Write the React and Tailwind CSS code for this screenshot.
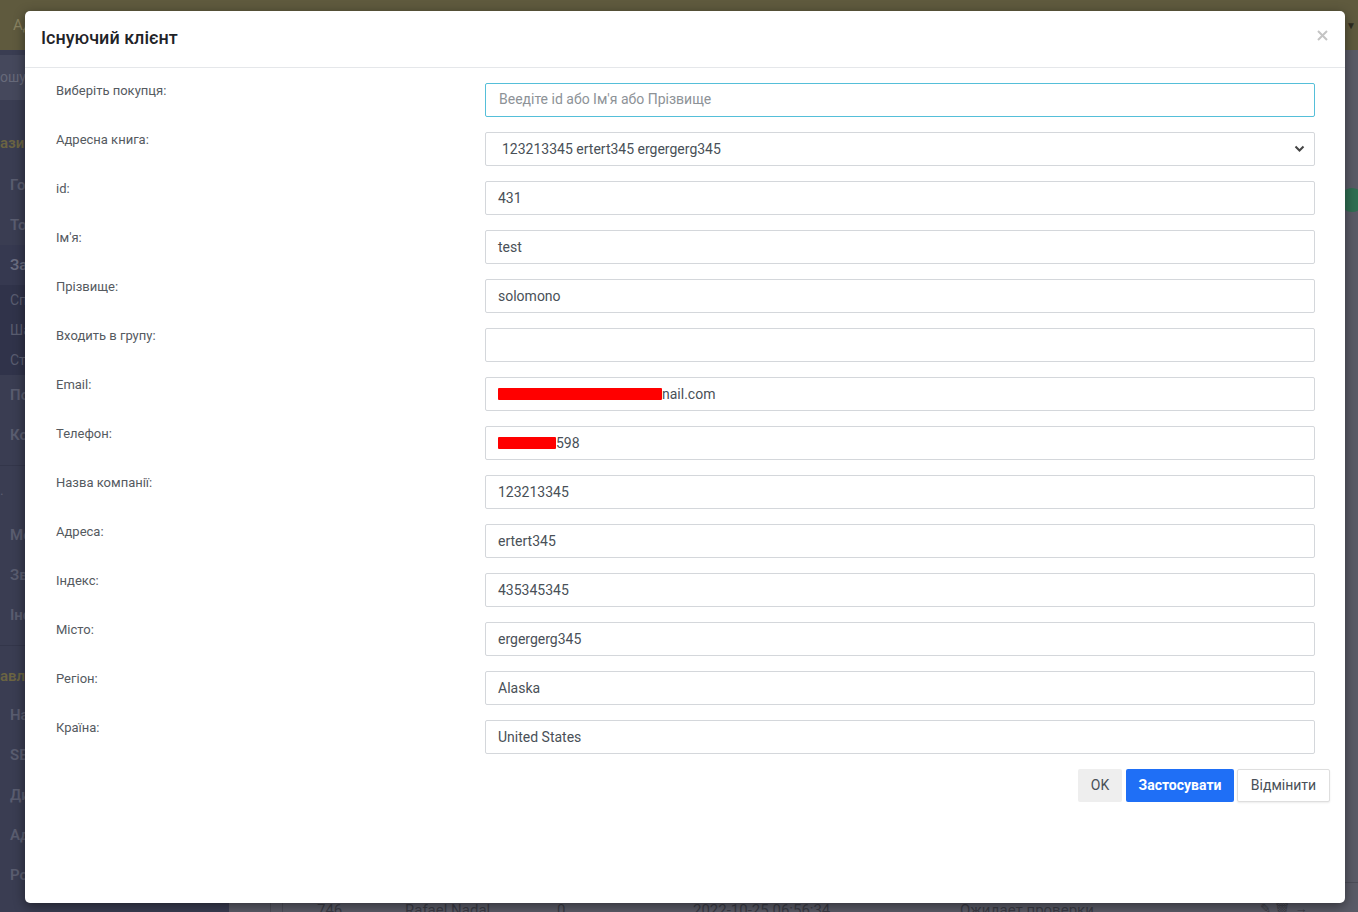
import React from "react";

const fields = [
  { label: "Виберіть покупця:", placeholder: "Веедіте id або Ім'я або Прізвище", focus: true },
  { label: "Адресна книга:", value: "123213345 ertert345 ergergerg345", select: true },
  { label: "id:", value: "431" },
  { label: "Ім'я:", value: "test" },
  { label: "Прізвище:", value: "solomono" },
  { label: "Входить в групу:", value: "" },
  { label: "Email:", value: "nail.com", redact: "w-[164px]" },
  { label: "Телефон:", value: "598", redact: "w-[58px]" },
  { label: "Назва компанії:", value: "123213345" },
  { label: "Адреса:", value: "ertert345" },
  { label: "Індекс:", value: "435345345" },
  { label: "Місто:", value: "ergergerg345" },
  { label: "Регіон:", value: "Alaska" },
  { label: "Країна:", value: "United States" },
];

// sidebar text only shows its first letters beside the modal
function Clip({ children, className = "" }) {
  return (
    <span className={"block w-[25px] overflow-hidden whitespace-nowrap " + className}>{children}</span>
  );
}

function SideItem({ text, className = "" }) {
  return (
    <div className={"h-[40px] flex items-center text-[15px] font-semibold text-[#5a5d70] " + className}>
      <Clip className="pl-[10px]">{text}</Clip>
    </div>
  );
}

function SubItem({ text }) {
  return (
    <div className="h-[30px] flex items-center text-[14px] text-[#5a5d70]">
      <Clip className="pl-[10px]">{text}</Clip>
    </div>
  );
}

function Background() {
  return (
    <div className="absolute inset-0 flex flex-col bg-[#5a5b67]">
      <div className="h-[50px] bg-[#5f5a3e] flex items-center justify-between pl-[13px] pr-[2px] text-[15px] text-[#8a8462] shrink-0">
        <Clip>Ад</Clip>
        <span className="text-[10px] text-[#2e2c20]">▼</span>
      </div>
      <div className="flex flex-1">
        <div className="w-[229px] bg-[#3a3d52] flex flex-col shrink-0">
          <div className="h-[50px] pt-[5px] bg-[#3a3d52]">
            <div className="h-[45px] bg-[#45485c] flex items-center text-[14px] text-[#676a7a]">
              <Clip>ошук</Clip>
            </div>
          </div>
          <div className="h-[65px] flex items-end pb-[11px] text-[15px] font-semibold text-[#6b6442]">
            <Clip>азин</Clip>
          </div>
          <SideItem text="Головна" />
          <SideItem text="Товари" />
          <SideItem text="Замовлення" className="bg-[#363950] text-[#6a6d80]" />
          <div className="bg-[#30334a]">
            <SubItem text="Список" />
            <SubItem text="Шаблони" />
            <SubItem text="Статуси" />
          </div>
          <SideItem text="Покупці" />
          <SideItem text="Коментарі" />
          <div className="h-[20px] flex flex-col justify-center">
            <div className="border-b border-[#33364a]" />
          </div>
          <div className="h-[40px] flex items-center text-[14px] text-[#5a5d70]">
            <Clip>·</Clip>
          </div>
          <SideItem text="Модулі" />
          <SideItem text="Звіти" />
          <SideItem text="Інструменти" />
          <div className="h-[20px] flex flex-col justify-center">
            <div className="border-b border-[#33364a]" />
          </div>
          <div className="h-[40px] flex items-center pt-[2px] text-[15px] font-semibold text-[#6b6442]">
            <Clip>авлі</Clip>
          </div>
          <SideItem text="Налаштування" />
          <SideItem text="SEO" />
          <SideItem text="Дизайн" />
          <SideItem text="Адміни" />
          <SideItem text="Розсилки" />
        </div>
        <div className="flex-1 flex flex-col">
          <div className="h-[162px] flex justify-end pt-[138px]">
            <div className="w-[24px] h-[24px] rounded-full bg-[#2f6e52] -mr-[6px]" />
          </div>
          <div className="flex-1" />
          <div className="h-[30px] flex items-start border-t border-[#4c4d58] text-[15px] text-[#3a3b45] shrink-0">
            <div className="w-[42px] h-full border-r border-[#4c4d58]" />
            <div className="w-[12px] h-full border-r border-[#4c4d58]" />
            <div className="w-[122px] pl-[34px] pt-[16px]">746</div>
            <div className="w-[152px] pt-[16px]">Rafael Nadal</div>
            <div className="w-[136px] pt-[16px]">0</div>
            <div className="w-[267px] pt-[16px]">2022-10-25 06:56:34</div>
            <div className="w-[300px] pt-[16px]">Ожидает проверки</div>
            <div className="pt-[16px] text-[13px]">✎ 🗑 →</div>
          </div>
        </div>
      </div>
    </div>
  );
}

function Field({ f }) {
  const base =
    "h-[34px] w-full rounded-[2px] border bg-white flex items-center text-[14px] text-[#495057] ";
  if (f.select) {
    return (
      <div className={base + "border-[#d4d7db] pl-[16px] pr-[9px] justify-between"}>
        <span>{f.value}</span>
        <svg width="11" height="8" viewBox="0 0 11 8">
          <path d="M1.5 1.5 L5.5 5.5 L9.5 1.5" fill="none" stroke="#444" strokeWidth="2" />
        </svg>
      </div>
    );
  }
  if (f.focus) {
    return (
      <div className={base + "border-[#55bfd9] pl-[13px]"}>
        <span className="text-[#8d9297] -mt-[1px]">{f.placeholder}</span>
      </div>
    );
  }
  return (
    <div className={base + "border-[#d4d7db] pl-[12px]"}>
      {f.redact && <span className={"inline-block h-[12px] bg-[#ff0000] rounded-[1px] " + f.redact} />}
      <span>{f.value}</span>
    </div>
  );
}

export default function App() {
  return (
    <div className="relative w-[1358px] h-[912px] overflow-hidden font-['Roboto',sans-serif]">
      <Background />
      <div className="absolute left-[25px] top-[11px] w-[1320px] h-[892px] bg-white rounded-[5px] shadow-[0_3px_12px_rgba(0,0,0,0.45)] flex flex-col">
        <div className="h-[57px] shrink-0 border-b border-[#e5e7ea] flex items-center justify-between pl-[16px] pr-[17px]">
          <h4 className="text-[18px] font-medium text-[#1f2328] -mt-[3px]">Існуючий клієнт</h4>
          <svg width="11" height="11" viewBox="0 0 11 11" className="-mt-[7px]">
            <path d="M1 1 L10 10 M10 1 L1 10" stroke="#c4c4c4" strokeWidth="2" />
          </svg>
        </div>
        <div className="pl-[31px] pr-[30px] pt-[15px] flex flex-col">
          {fields.map((f) => (
            <div key={f.label} className="flex mb-[15px]">
              <div className="w-[429px] shrink-0 -mt-[1px] text-[13px] leading-[17px] text-[#555a5f]">{f.label}</div>
              <div className="flex-1">
                <Field f={f} />
              </div>
            </div>
          ))}
          <div className="flex justify-end -mr-[15px]">
            <button className="h-[33px] w-[44px] bg-[#eeeeee] rounded-[2px] text-[14px] text-[#495057]">OK</button>
            <button className="h-[33px] w-[108px] ml-[4px] bg-[#1f6ff6] rounded-[2px] text-[14px] font-bold text-white">Застосувати</button>
            <button className="h-[33px] w-[93px] ml-[3px] bg-white border border-[#dedede] rounded-[2px] text-[14px] text-[#495057] shadow-[0_1px_2px_rgba(0,0,0,0.08)]">Відмінити</button>
          </div>
        </div>
      </div>
    </div>
  );
}
